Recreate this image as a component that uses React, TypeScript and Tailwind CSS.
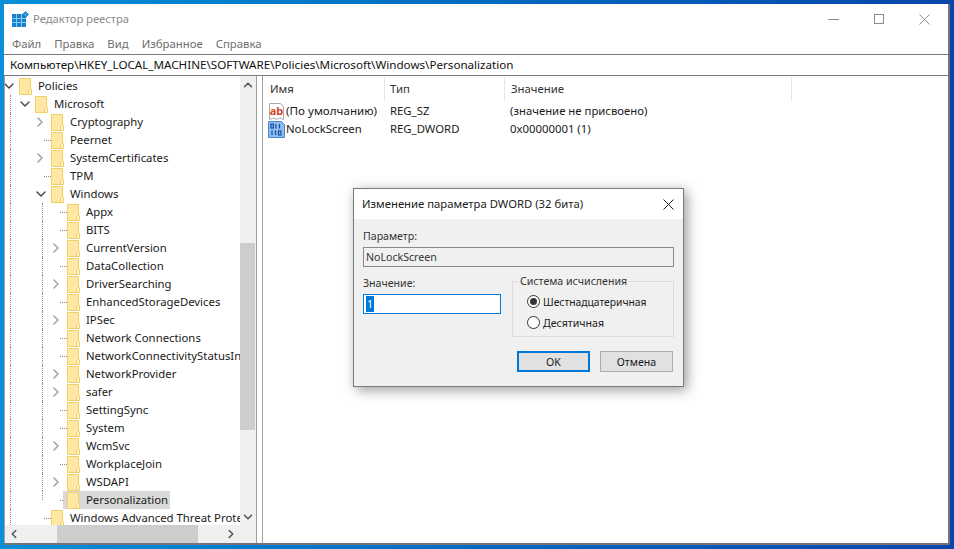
import { ChevronDown, ChevronLeft, ChevronRight, ChevronUp } from 'lucide-react';

type TreeRow = {
  name: string;
  depth: number;
  kind: 'open' | 'closed' | 'leaf';
  guides?: number[];
  last?: boolean;
  selected?: boolean;
};

const ROWS: TreeRow[] = [
  { name: 'Policies', depth: 0, kind: 'open' },
  { name: 'Microsoft', depth: 1, kind: 'open', guides: [0] },
  { name: 'Cryptography', depth: 2, kind: 'closed', guides: [0] },
  { name: 'Peernet', depth: 2, kind: 'leaf', guides: [0] },
  { name: 'SystemCertificates', depth: 2, kind: 'closed', guides: [0] },
  { name: 'TPM', depth: 2, kind: 'leaf', guides: [0] },
  { name: 'Windows', depth: 2, kind: 'open', guides: [0] },
  { name: 'Appx', depth: 3, kind: 'leaf', guides: [0, 2] },
  { name: 'BITS', depth: 3, kind: 'leaf', guides: [0, 2] },
  { name: 'CurrentVersion', depth: 3, kind: 'closed', guides: [0, 2] },
  { name: 'DataCollection', depth: 3, kind: 'leaf', guides: [0, 2] },
  { name: 'DriverSearching', depth: 3, kind: 'closed', guides: [0, 2] },
  { name: 'EnhancedStorageDevices', depth: 3, kind: 'leaf', guides: [0, 2] },
  { name: 'IPSec', depth: 3, kind: 'closed', guides: [0, 2] },
  { name: 'Network Connections', depth: 3, kind: 'leaf', guides: [0, 2] },
  { name: 'NetworkConnectivityStatusIndicator', depth: 3, kind: 'leaf', guides: [0, 2] },
  { name: 'NetworkProvider', depth: 3, kind: 'closed', guides: [0, 2] },
  { name: 'safer', depth: 3, kind: 'closed', guides: [0, 2] },
  { name: 'SettingSync', depth: 3, kind: 'leaf', guides: [0, 2] },
  { name: 'System', depth: 3, kind: 'leaf', guides: [0, 2] },
  { name: 'WcmSvc', depth: 3, kind: 'closed', guides: [0, 2] },
  { name: 'WorkplaceJoin', depth: 3, kind: 'leaf', guides: [0, 2] },
  { name: 'WSDAPI', depth: 3, kind: 'closed', guides: [0, 2] },
  { name: 'Personalization', depth: 3, kind: 'leaf', guides: [0], last: true, selected: true },
  { name: 'Windows Advanced Threat Protection', depth: 2, kind: 'leaf', guides: [0] },
];

function AppIcon() {
  return (
    <svg width="18" height="17" viewBox="0 0 18 17" className="shrink-0">
      <rect x="0" y="3" width="14" height="13" fill="#1581cf" />
      <path d="M0 7.5h14M0 11.5h14M4.5 3v13M9.5 3v13" stroke="#8cc8ee" strokeWidth="1" />
      <path d="M13.5 0.5l3 3-3 3-3-3z" fill="#2d9bdd" stroke="#0f6db3" strokeWidth="0.8" />
    </svg>
  );
}

function Folder() {
  return (
    <svg width="13" height="17" viewBox="0 0 13 17" className="shrink-0">
      <path d="M0.5 0.5h11v11h1v5h-12z" fill="#ffe8a3" stroke="#f3cf68" />
      <path d="M9.5 12v4.5" stroke="#f3cf68" fill="none" />
      <path d="M10 12h2v4h-2z" fill="#fff3cc" />
    </svg>
  );
}

function StringIcon() {
  return (
    <span className="relative flex h-[17px] w-[17px] shrink-0 items-start justify-center">
      <svg width="17" height="17" viewBox="0 0 17 17" className="absolute inset-0">
        <path d="M1.5 0.5h11l3 3v13l-4-1.5-3 1.5-3-1.5-4 1.5z" fill="#fff" stroke="#a9a9a9" />
      </svg>
      <span className="relative mt-[2px] text-[11px] font-bold leading-[12px] text-[#d24726]">ab</span>
    </span>
  );
}

function DwordIcon() {
  return (
    <svg width="17" height="17" viewBox="0 0 17 17" className="shrink-0">
      <path d="M0.5 0.5h13l3 3v13h-16z" fill="#8fbdf0" stroke="#4a86cf" />
      <g fill="none" stroke="#174f9e" strokeWidth="1.2">
        <rect x="3" y="3" width="2.4" height="4" />
        <path d="M8 3v4.5M11.5 3v4.5" />
        <path d="M4 9.5v4.5M7.5 9.5v4.5" />
        <rect x="10.5" y="10" width="2.4" height="4" />
      </g>
    </svg>
  );
}

function Cross({ className }: { className: string }) {
  return (
    <svg width="11" height="11" viewBox="0 0 11 11" className={className}>
      <path d="M0.5 0.5l10 10M10.5 0.5l-10 10" stroke="currentColor" strokeWidth="1" fill="none" />
    </svg>
  );
}

function TreeRowView({ row }: { row: TreeRow }) {
  const cells = Array.from({ length: row.depth }, (_, i) => i);
  return (
    <div className="flex h-[18px] items-center whitespace-nowrap">
      {cells.map((i) => (
        <span key={i} className="flex h-full w-4 shrink-0 pl-[5px]">
          {row.guides?.includes(i) && <span className="h-full border-l border-dotted border-[#8c8c8c]" />}
          {row.last && i === 2 && (
            <span className="h-[9px] self-start border-l border-dotted border-[#8c8c8c]" />
          )}
        </span>
      ))}
      <span className="flex h-full w-[14px] shrink-0 items-center">
        {row.kind === 'open' && <ChevronDown size={16} strokeWidth={2.2} className="-ml-[4px] text-[#4a4a4a]" />}
        {row.kind === 'closed' && <ChevronRight size={16} strokeWidth={2.4} className="-ml-[5px] text-[#a6a6a6]" />}
        {row.kind === 'leaf' && (
          <span className="ml-[7px] w-[7px] border-t border-dotted border-[#8c8c8c]" />
        )}
      </span>
      <span
        className={
          row.selected
            ? 'relative -ml-[4px] flex h-full w-[107px] shrink-0 items-center bg-[#d9d9d9] pl-[4px]'
            : 'flex items-center'
        }
      >
        <Folder />
        <span className="ml-[6px] text-[#1a1a1a]">{row.name}</span>
      </span>
    </div>
  );
}

function Tree() {
  return (
    <div className="flex w-[252px] shrink-0 flex-col border-r border-[#a0a0a0] bg-white">
      <div className="flex min-h-0 flex-1">
        <div className="min-w-0 flex-1 overflow-hidden pt-px">
          {ROWS.map((r) => (
            <TreeRowView key={r.name} row={r} />
          ))}
        </div>
        <div className="flex w-[16px] shrink-0 flex-col bg-[#f0f0f0]">
          <div className="flex h-[17px] items-center justify-center text-[#505050]">
            <ChevronUp size={14} strokeWidth={2.5} />
          </div>
          <div className="mt-[150px] h-[187px] w-[15px] bg-[#cdcdcd]" />
          <div className="mt-auto flex h-[17px] items-center justify-center text-[#505050]">
            <ChevronDown size={14} strokeWidth={2.5} />
          </div>
        </div>
      </div>
      <div className="flex h-[18px] shrink-0 bg-[#f0f0f0] text-[#505050]">
        <div className="flex w-[17px] items-center justify-center">
          <ChevronLeft size={14} strokeWidth={2.5} />
        </div>
        <div className="ml-[35px] w-[141px] bg-[#cdcdcd]" />
        <div className="ml-auto mr-[17px] flex w-[17px] items-center justify-center">
          <ChevronRight size={14} strokeWidth={2.5} />
        </div>
      </div>
    </div>
  );
}

function ValueList() {
  return (
    <div className="min-w-0 flex-1 border-l border-[#a0a0a0] bg-white pt-px">
      <div className="flex h-[24px] items-center text-[#333]">
        <div className="flex h-full w-[122px] items-center border-r border-[#e5e5e5] pl-[7px]">Имя</div>
        <div className="flex h-full w-[120px] items-center border-r border-[#e5e5e5] pl-[5px]">Тип</div>
        <div className="flex h-full w-[287px] items-center border-r border-[#e5e5e5] pl-[6px]">Значение</div>
      </div>
      <div className="mt-[1px] flex h-[18px] items-center">
        <div className="flex w-[122px] items-center pl-[5px]">
          <StringIcon />
          <span className="ml-px whitespace-nowrap text-[11.65px]">(По умолчанию)</span>
        </div>
        <div className="w-[120px] pl-[5px]">REG_SZ</div>
        <div className="pl-[5px]">(значение не присвоено)</div>
      </div>
      <div className="flex h-[18px] items-center">
        <div className="flex w-[122px] items-center pl-[5px]">
          <DwordIcon />
          <span className="ml-px">NoLockScreen</span>
        </div>
        <div className="w-[120px] pl-[5px]">REG_DWORD</div>
        <div className="pl-[5px]">0x00000001 (1)</div>
      </div>
    </div>
  );
}

function DwordDialog() {
  return (
    <div className="absolute left-[353px] top-[188px] flex h-[199px] w-[331px] flex-col border border-[#7a7a7a] bg-[#f0f0f0] text-[10.6px] text-[#1a1a1a] shadow-[3px_3px_12px_rgba(0,0,0,0.4)]">
      <div className="flex h-[30px] shrink-0 items-center justify-between bg-white pl-[8px] pr-[9px] text-[11.3px]">
        <span>Изменение параметра DWORD (32 бита)</span>
        <Cross className="text-[#222]" />
      </div>
      <div className="flex flex-1 flex-col px-[9px] pt-[9px]">
        <div className="h-[16px] leading-[16px] text-[#333]">Параметр:</div>
        <div className="mt-[3px] flex h-[20px] items-center border border-[#8a8a8a] bg-[#f0f0f0] pl-[2px] text-[#333]">
          NoLockScreen
        </div>
        <div className="mt-[8px] flex">
          <div className="w-[138px] shrink-0">
            <div className="h-[16px] leading-[16px] text-[#333]">Значение:</div>
            <div className="mt-[3px] flex h-[20px] items-center border border-[#0078d7] bg-white pl-[2px]">
              <span className="bg-[#0078d7] px-[1px] leading-[16px] text-white">1</span>
            </div>
          </div>
          <div className="relative ml-[11px] mt-[6px] h-[56px] flex-1 border border-[#dcdcdc] pl-[14px] pt-[9px]">
            <span className="absolute -top-[9px] left-[6px] bg-[#f0f0f0] px-px leading-[16px] text-[#333]">
              Система исчисления
            </span>
            <label className="flex h-[21px] items-center gap-[3px]">
              <span className="flex h-[13px] w-[13px] items-center justify-center rounded-full border border-[#333] bg-white">
                <span className="h-[7px] w-[7px] rounded-full bg-[#333]" />
              </span>
              <span className="text-[10.3px]">Шестнадцатеричная</span>
            </label>
            <label className="flex h-[21px] items-center gap-[3px]">
              <span className="h-[13px] w-[13px] rounded-full border border-[#333] bg-white" />
              Десятичная
            </label>
          </div>
        </div>
        <div className="mr-px mt-[14px] flex justify-end gap-[10px]">
          <div className="flex h-[21px] w-[73px] items-center justify-center border-2 border-[#0078d7] bg-[#e1e1e1]">OK</div>
          <div className="flex h-[21px] w-[73px] items-center justify-center border border-[#adadad] bg-[#e1e1e1]">Отмена</div>
        </div>
      </div>
    </div>
  );
}

export default function App() {
  return (
    <div className="relative h-[549px] w-[954px] overflow-hidden bg-gradient-to-r from-[#0a8fd8] to-[#0a45ac] p-[4px] font-['Noto_Sans',sans-serif] text-[11.35px] leading-[16px] text-[#1a1a1a]">
      <div className="flex h-full flex-col border-b-2 border-r-2 border-[#6d7480] bg-white">
        <div className="flex h-[30px] shrink-0 items-center pl-[8px] text-[#8a8a8a]">
          <AppIcon />
          <span className="ml-[3px] text-[11.2px]">Редактор реестра</span>
          <div className="ml-auto flex items-center gap-[35px] pr-[18px] text-[#8a8a8a]">
            <span className="h-px w-[11px] bg-[#8a8a8a]" />
            <span className="h-[10px] w-[10px] border border-[#8a8a8a]" />
            <Cross className="text-[#8a8a8a]" />
          </div>
        </div>
        <div className="flex h-[20px] shrink-0 items-center gap-[13px] pl-[8px] text-[#6e6e6e]">
          <span>Файл</span>
          <span>Правка</span>
          <span>Вид</span>
          <span>Избранное</span>
          <span>Справка</span>
        </div>
        <div className="flex h-[22px] shrink-0 items-center border-y border-[#7a7a7a] pl-[6px] text-[11.63px] text-[#111]">
          Компьютер\HKEY_LOCAL_MACHINE\SOFTWARE\Policies\Microsoft\Windows\Personalization
        </div>
        <div className="flex min-h-0 flex-1 border-l border-[#a0a0a0]">
          <Tree />
          <div className="w-[5px] shrink-0 bg-white" />
          <ValueList />
        </div>
      </div>
      <DwordDialog />
    </div>
  );
}
